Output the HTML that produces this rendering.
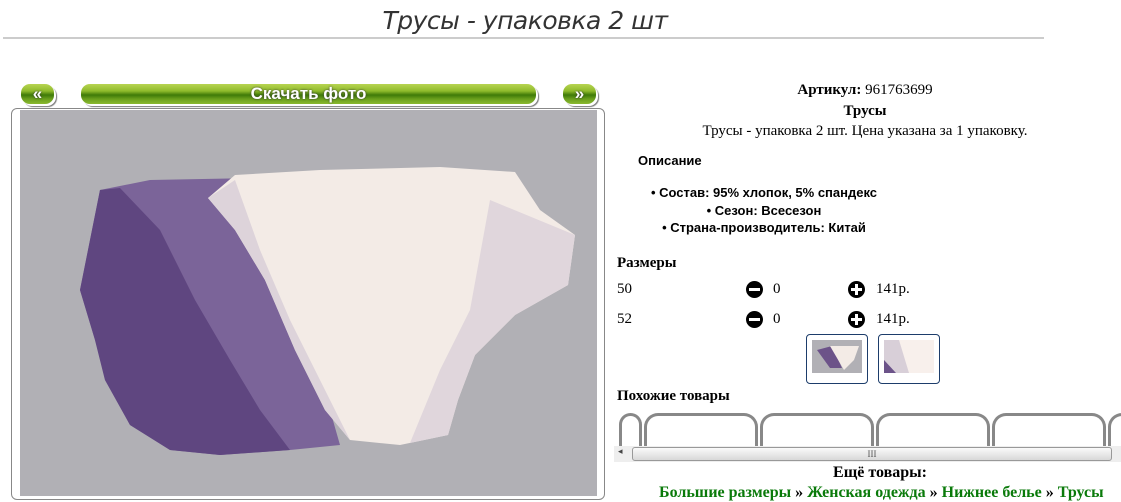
<!DOCTYPE html>
<html><head><meta charset="utf-8"><style>
body{margin:0;width:1121px;height:499px;overflow:hidden;background:#fff;position:relative;font-family:"Liberation Serif",serif;font-size:15px;color:#000}
.a{position:absolute}
.btn{position:absolute;height:20px;border-radius:9px;background:linear-gradient(#b8d452 0%,#8fbb2c 35%,#3f7a08 55%,#6a9f1c 75%,#8ab92f 100%);box-shadow:2px 2px 0 #fff,3px 3px 1px #777;color:#fff;font:bold 17px "Liberation Sans",sans-serif;text-align:center;line-height:20px;text-shadow:0 0 2px #333}
.s{font-family:"Liberation Sans",sans-serif;font-weight:bold;font-size:13px}
.circ{position:absolute;width:17px;height:17px;border-radius:50%;background:#000}
.circ:before{content:"";position:absolute;left:3px;top:7px;width:11px;height:3px;background:#fff}
.plus:after{content:"";position:absolute;left:7px;top:3px;width:3px;height:11px;background:#fff}
.tab{position:absolute;top:413px;height:40px;border:3px solid #888;border-bottom:none;border-radius:14px 14px 0 0;box-sizing:border-box}
.g{color:#0a7a0a;font-weight:bold;font-size:16px}
</style></head><body>
<div class="a" style="left:0;top:6px;width:1050px;text-align:center;font:oblique 25px 'DejaVu Sans',sans-serif;color:#333;letter-spacing:-0.5px">Трусы - упаковка 2 шт</div>
<div class="a" style="left:3px;top:37px;width:1041px;height:2px;background:#ccc"></div>

<div class="btn" style="left:21px;top:84px;width:33px">«</div>
<div class="btn" style="left:81px;top:84px;width:455px">Скачать фото</div>
<div class="btn" style="left:563px;top:84px;width:33px">»</div>

<div class="a" style="left:11px;top:108px;width:594px;height:392px;border:1px solid #888;border-radius:6px;box-sizing:border-box"></div>
<svg class="a" style="left:20px;top:110px" width="577" height="386">
<rect width="577" height="386" fill="#b1b0b5"/>
<path d="M80 80 L130 70 L390 65 L395 85 L330 110 L300 160 L290 230 L310 300 L320 335 L270 340 L200 345 L150 340 L110 315 L85 270 L75 230 L60 180 Z" fill="#7b6499"/>
<path d="M80 80 L100 78 L140 120 L175 190 L210 250 L240 300 L270 340 L200 345 L150 340 L110 315 L85 270 L75 230 L60 180 Z" fill="#5f4680"/>
<path d="M188 88 L215 65 L300 60 L420 57 L495 62 L520 100 L555 125 L548 175 L495 205 L455 245 L438 290 L428 325 L380 335 L330 330 L305 300 L275 240 L245 170 L215 120 Z" fill="#f3ebe6"/>
<path d="M188 88 L215 70 L240 140 L270 210 L300 270 L330 330 L305 300 L275 240 L245 170 L215 120 Z" fill="#ddd3da"/>
<path d="M470 90 L555 125 L548 175 L495 205 L455 245 L438 290 L428 325 L390 333 L420 260 L450 200 Z" fill="#e0d6dc"/>
</svg>

<div class="a" style="left:610px;top:80px;width:510px;text-align:center;line-height:20.5px"><b>Артикул:</b> 961763699<br><b>Трусы</b><br>Трусы - упаковка 2 шт. Цена указана за 1 упаковку.</div>
<div class="a s" style="left:638px;top:153px">Описание</div>
<div class="a s" style="left:610px;top:184px;width:308px;text-align:center;line-height:17.5px;white-space:nowrap">• Состав: 95% хлопок, 5% спандекс<br>• Сезон: Всесезон<br>• Страна-производитель: Китай</div>
<div class="a" style="left:617px;top:255px;font-weight:bold">Размеры</div>
<div class="a" style="left:617px;top:281px">50</div>
<div class="circ" style="left:746px;top:281px"></div><div class="a" style="left:773px;top:281px">0</div>
<div class="circ plus" style="left:848px;top:281px"></div><div class="a" style="left:876px;top:281px">141р.</div>
<div class="a" style="left:617px;top:311px">52</div>
<div class="circ" style="left:746px;top:311px"></div><div class="a" style="left:773px;top:311px">0</div>
<div class="circ plus" style="left:848px;top:311px"></div><div class="a" style="left:876px;top:311px">141р.</div>
<div class="a" style="left:806px;top:334px;width:60px;height:48px;border:1px solid #1d3d6b;border-radius:4px"><svg style="margin:5px" width="50" height="33"><rect width="50" height="33" fill="#b1b0b5"/><path d="M5 10 L20 6 L30 28 L18 28 Z" fill="#6c5389"/><path d="M18 6 L47 6 L42 20 L32 30 Z" fill="#f3ebe6"/></svg></div>
<div class="a" style="left:878px;top:334px;width:60px;height:48px;border:1px solid #1d3d6b;border-radius:4px"><svg style="margin:5px" width="50" height="33"><rect width="50" height="33" fill="#f8f0ec"/><path d="M0 0 L15 0 L25 33 L0 33 Z" fill="#d8cfd8"/><path d="M0 20 L12 33 L0 33 Z" fill="#6c5389"/></svg></div>
<div class="a" style="left:617px;top:388px;font-weight:bold">Похожие товары</div>
<div class="tab" style="left:619px;width:23px"></div>
<div class="tab" style="left:644px;width:114px"></div>
<div class="tab" style="left:760px;width:114px"></div>
<div class="tab" style="left:876px;width:114px"></div>
<div class="tab" style="left:992px;width:114px"></div>
<div class="tab" style="left:1108px;width:30px"></div>
<div class="a" style="left:614px;top:446px;width:507px;height:16px;background:#eee"></div>
<div class="a" style="left:632px;top:447px;width:478px;height:12px;border:1px solid #999;border-radius:3px;background:linear-gradient(#fafafa,#d8d8d8);font-size:9px;text-align:center;line-height:12px;color:#555">III</div>
<div class="a" style="left:618px;top:446px;font-size:9px;color:#444">◂</div>
<div class="a" style="left:610px;top:464px;width:540px;text-align:center;font-weight:bold;font-size:16px">Ещё товары:</div>
<div class="a" style="left:659px;top:484px;white-space:nowrap;font-size:16px"><span class="g">Большие размеры</span> <b>»</b> <span class="g">Женская одежда</span> <b>»</b> <span class="g">Нижнее белье</span> <b>»</b> <span class="g">Трусы</span></div>
</body></html>
